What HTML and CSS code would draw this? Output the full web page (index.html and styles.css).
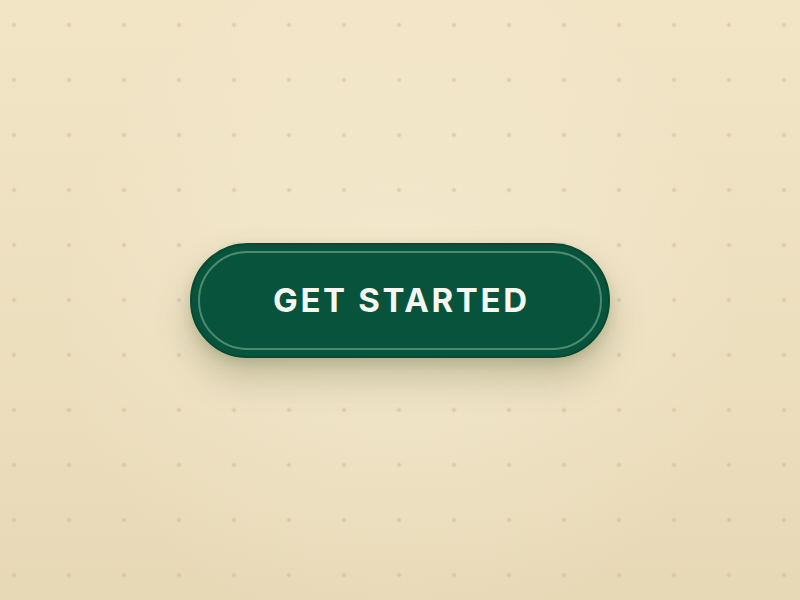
FILE: index.html
```html
<!DOCTYPE html>
<html lang="en">
<head>
<meta charset="utf-8">
<title>Get Started</title>
<link rel="stylesheet" href="styles.css">
</head>
<body>
<main class="stage">
  <button class="cta" type="button"><span class="cta-label">GET STARTED</span></button>
</main>
</body>
</html>
```
FILE: styles.css
```css
html, body {
  margin: 0;
  padding: 0;
  width: 100%;
  height: 100%;
}
body {
  background-color: #eee0bf;
  background-image:
    radial-gradient(circle at 50% 50%, rgba(255,250,235,0.3) 0%, rgba(255,250,235,0) 70%),
    linear-gradient(180deg, #f2e5c6 0%, #ecdfbe 60%, #e7d9b6 100%);
}
.stage {
  width: 100%;
  height: 100%;
  display: flex;
  align-items: center;
  justify-content: center;
  background-image: radial-gradient(circle, rgba(195,175,135,0.5) 0, rgba(195,175,135,0.4) 1.6px, transparent 2.6px);
  background-size: 55px 55px;
  background-position: -13.5px -2.5px;
}
.cta {
  width: 420px;
  height: 115px;
  border-radius: 58px;
  border: 2px solid #064a34;
  background: #07533b;
  box-shadow: 0 20px 36px rgba(70, 85, 30, 0.25), 0 6px 12px rgba(50, 65, 20, 0.15);
  padding: 6px;
  display: flex;
  cursor: pointer;
}
.cta-label {
  flex: 1;
  display: flex;
  align-items: center;
  justify-content: center;
  border: 2px solid #4d8a70;
  border-radius: 50px;
  color: #f6f7f1;
  font-family: Inter, "Noto Sans", sans-serif;
  font-weight: 700;
  font-size: 33px;
  letter-spacing: 0.08em;
  padding-left: 0.08em;
}
```
